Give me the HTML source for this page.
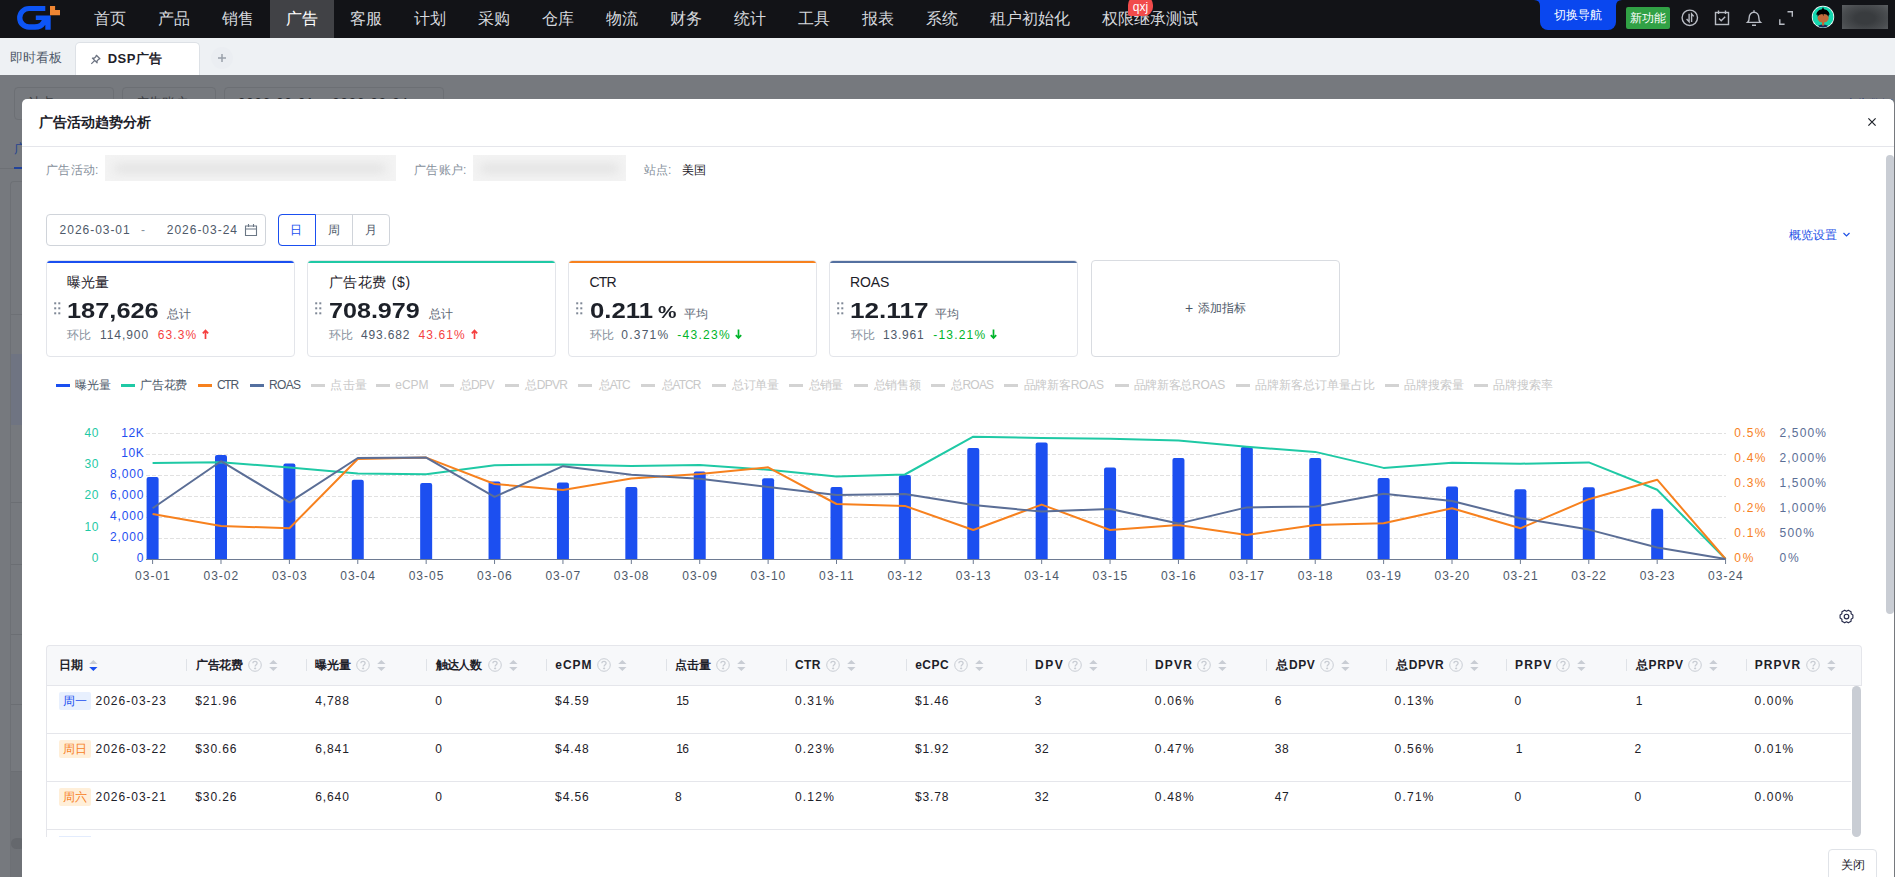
<!DOCTYPE html><html><head><meta charset="utf-8"><style>
*{box-sizing:border-box;margin:0;padding:0}
html,body{width:1895px;height:877px;overflow:hidden;background:#fff;font-family:"Liberation Sans",sans-serif;color:#1d2129}
.a{position:absolute;white-space:nowrap}
.bm{display:inline-block;width:0;height:0}
</style></head><body>
<div class="a" style="left:0;top:0;width:1895px;height:38px;background:#121317"></div>
<svg class="a" style="left:0;top:0" width="70" height="37" viewBox="0 0 70 37">
<path d="M29 6 H45.3 V11.1 H29 A6.6 6.6 0 0 0 29 24.3 H34.5 C38.5 24.3 40.8 22.6 41.8 19.9 H35.8 V15.5 H50.7 V29.8 H45.3 V24.8 C43.2 28.2 40 29.8 35 29.8 H29 A11.9 11.9 0 0 1 29 6 Z" fill="#0d55f5"/>
<path d="M50 6 H55.1 V10.1 H60 V15.2 H50 Z" fill="#ef8633"/>
</svg>
<div class="a" style="left:270px;top:0;width:64px;height:38px;background:#414246"></div>
<div class="a" style="left:94px;top:0;height:37px;line-height:37px;font-size:16px;color:#d6d9de">首页</div>
<div class="a" style="left:158px;top:0;height:37px;line-height:37px;font-size:16px;color:#d6d9de">产品</div>
<div class="a" style="left:222px;top:0;height:37px;line-height:37px;font-size:16px;color:#d6d9de">销售</div>
<div class="a" style="left:286px;top:0;height:37px;line-height:37px;font-size:16px;color:#ffffff">广告</div>
<div class="a" style="left:350px;top:0;height:37px;line-height:37px;font-size:16px;color:#d6d9de">客服</div>
<div class="a" style="left:414px;top:0;height:37px;line-height:37px;font-size:16px;color:#d6d9de">计划</div>
<div class="a" style="left:478px;top:0;height:37px;line-height:37px;font-size:16px;color:#d6d9de">采购</div>
<div class="a" style="left:542px;top:0;height:37px;line-height:37px;font-size:16px;color:#d6d9de">仓库</div>
<div class="a" style="left:606px;top:0;height:37px;line-height:37px;font-size:16px;color:#d6d9de">物流</div>
<div class="a" style="left:670px;top:0;height:37px;line-height:37px;font-size:16px;color:#d6d9de">财务</div>
<div class="a" style="left:734px;top:0;height:37px;line-height:37px;font-size:16px;color:#d6d9de">统计</div>
<div class="a" style="left:798px;top:0;height:37px;line-height:37px;font-size:16px;color:#d6d9de">工具</div>
<div class="a" style="left:862px;top:0;height:37px;line-height:37px;font-size:16px;color:#d6d9de">报表</div>
<div class="a" style="left:926px;top:0;height:37px;line-height:37px;font-size:16px;color:#d6d9de">系统</div>
<div class="a" style="left:990px;top:0;height:37px;line-height:37px;font-size:16px;color:#d6d9de">租户初始化</div>
<div class="a" style="left:1102px;top:0;height:37px;line-height:37px;font-size:16px;color:#d6d9de">权限继承测试</div>
<div class="a" style="left:1128px;top:-4px;width:25px;height:20px;border-radius:9px 9px 9px 2px;background:#f14b4b;color:#fff;font-size:12px;line-height:22px;text-align:center">qxj</div>
<svg class="a" style="left:1534px;top:0" width="88" height="8" viewBox="0 0 88 8"><path d="M0 0 Q6 0 6 6 V8 H82 V6 Q82 0 88 0 Z" fill="#0a47ef"/></svg>
<div class="a" style="left:1540px;top:0;width:76px;height:30px;background:#0a47ef;border-radius:0 0 8px 8px;color:#fff;font-size:12px;line-height:30px;text-align:center">切换导航</div>
<div class="a" style="left:1626px;top:7px;width:44px;height:22px;background:#31a145;border-radius:2px;color:#fff;font-size:12px;line-height:22px;text-align:center">新功能</div>
<svg class="a" style="left:1680px;top:8px" width="20" height="20" viewBox="0 0 20 20" fill="none" stroke="#b8bcc4" stroke-width="1.4">
<circle cx="9.8" cy="9.8" r="7.7"/><path d="M9.1 5.8 V13.7 L6.6 11.1 M11.6 13.9 V5.9 L13.7 8.4"/></svg>
<svg class="a" style="left:1712px;top:8px" width="20" height="20" viewBox="0 0 20 20" fill="none" stroke="#b8bcc4" stroke-width="1.4">
<rect x="3.5" y="4.5" width="13" height="12"/><path d="M6.5 2.5 V6 M13.5 2.5 V6 M7 10.5 L9.2 12.7 L13.2 8.7"/></svg>
<svg class="a" style="left:1744px;top:8px" width="20" height="20" viewBox="0 0 20 20" fill="none" stroke="#b8bcc4" stroke-width="1.4">
<path d="M10 2.3 V4 M3.6 14.4 C4.8 13.4 5.2 12.3 5.2 9.6 C5.2 6.4 7.3 4.2 10 4.2 C12.7 4.2 14.8 6.4 14.8 9.6 C14.8 12.3 15.2 13.4 16.4 14.4 Z M8 17.2 H12"/></svg>
<svg class="a" style="left:1776px;top:8px" width="20" height="20" viewBox="0 0 20 20" fill="none" stroke="#b8bcc4" stroke-width="1.4">
<path d="M11.5 3.8 H16.3 V8.8 M8.6 16.2 H3.8 V11.2"/></svg>
<svg class="a" style="left:1811px;top:5px" width="24" height="24" viewBox="0 0 24 24">
<defs><clipPath id="avc"><circle cx="12" cy="11.9" r="10.5"/></clipPath></defs>
<circle cx="12" cy="11.9" r="11.2" fill="#fff"/><circle cx="12" cy="11.9" r="10.5" fill="#14d6ae"/>
<g clip-path="url(#avc)">
<ellipse cx="12" cy="22.6" rx="6.2" ry="3" fill="#142a5c"/>
<rect x="11" y="15.5" width="2.2" height="5" fill="#c0693a"/>
<ellipse cx="12.1" cy="12.9" rx="5.6" ry="4.6" fill="#c0693a"/>
<path d="M5.2 9.8 C6 6 8.5 4.6 11 4.3 L12 2.1 L13 4.3 C15.5 4.6 18 6 18.7 9.8 L17.9 9.5 L17.5 11.8 C16.5 9.3 14 8.8 12.7 8.9 L12.3 11.2 L11.5 9 C9.5 9.2 7.5 9.6 6.7 11.8 L6.3 9.5 Z" fill="#000"/>
</g></svg>
<div class="a" style="left:1842px;top:5px;width:46px;height:24px;background:radial-gradient(ellipse at 50% 55%,#393c3f 30%,#4a4d50 70%,#5c5f62 100%)"></div>
<div class="a" style="left:0;top:38px;width:1895px;height:37px;background:#eef1f4"></div>
<div class="a" style="left:10px;top:37px;height:38px;line-height:42px;font-size:13px;color:#4e5969">即时看板</div>
<div class="a" style="left:74.5px;top:42px;width:125px;height:34px;background:#fff;border:1px solid #dde1e6;border-bottom:none;border-radius:5px 5px 0 0"></div>
<svg class="a" style="left:89.5px;top:53.5px" width="11" height="11" viewBox="0 0 11 11" fill="none" stroke="#6b7280" stroke-width="1.25">
<path d="M6.4 1.3 L9.9 4.8 L8.5 5.4 L7 7 L7.1 8.8 L2.4 4.1 L4.2 4.2 L5.8 2.7 Z M4.6 6.6 L1.3 9.9" stroke-linejoin="round"/></svg>
<div id="t1" class="a" style="left:107.71px;top:50.11px;font-size:13px;line-height:18px;color:#1d2129;font-weight:bold;letter-spacing:0.493px;"><i class="bm"></i>DSP广告</div>
<div class="a" style="left:211px;top:47px;width:22px;height:22px;border-radius:11px;background:#ebeef2"></div>
<svg class="a" style="left:217px;top:53px" width="10" height="10" viewBox="0 0 10 10" stroke="#9aa1ab" stroke-width="1.5"><path d="M5 1 V9 M1 5 H9"/></svg>
<div class="a" style="left:0;top:75px;width:1895px;height:802px;background:#76797e"></div>
<div class="a" style="left:14px;top:87px;width:100px;height:33px;border:1px solid #6c6f74;border-radius:4px"></div>
<div class="a" style="left:122px;top:87px;width:94px;height:33px;border:1px solid #6c6f74;border-radius:4px"></div>
<div class="a" style="left:224px;top:87px;width:220px;height:33px;border:1px solid #6c6f74;border-radius:4px"></div>
<div class="a" style="left:28px;top:94px;font-size:13px;line-height:18px;color:#3c3e42">站点</div>
<div class="a" style="left:136px;top:94px;font-size:13px;line-height:18px;color:#3c3e42">广告账户</div>
<div class="a" style="left:238px;top:94px;font-size:13px;line-height:18px;color:#2a2c30;letter-spacing:1px">2026-03-01 ~ 2026-03-24 ⌗</div>
<div class="a" style="left:1817px;top:95px;font-size:12px;line-height:18px;color:#1b3478">DSP 广告数据</div>
<div class="a" style="left:0;top:168px;width:22px;height:1px;background:#6d7075"></div>
<div class="a" style="left:14px;top:141px;font-size:13px;line-height:16px;color:#26448f">广</div>
<div class="a" style="left:14px;top:166.5px;width:8px;height:2.5px;background:#22439a"></div>
<div class="a" style="left:10px;top:181px;width:14px;height:700px;border:1px solid #6d7075;border-right:none;border-radius:4px 0 0 0"></div>
<div class="a" style="left:11px;top:314px;width:11px;height:1px;background:#6d7075"></div>
<div class="a" style="left:11px;top:354px;width:11px;height:71px;background:#6f7482"></div>
<div class="a" style="left:11px;top:502px;width:11px;height:1px;background:#6b6e73"></div>
<div class="a" style="left:11px;top:564px;width:11px;height:1px;background:#6b6e73"></div>
<div class="a" style="left:11px;top:634px;width:11px;height:1px;background:#6b6e73"></div>
<div class="a" style="left:11px;top:704px;width:11px;height:1px;background:#6b6e73"></div>
<div class="a" style="left:11px;top:771px;width:11px;height:1px;background:#6b6e73"></div>
<div class="a" style="left:11px;top:772px;width:11px;height:105px;background:#6f7277"></div>
<div class="a" style="left:11px;top:838px;width:14px;height:11px;border-radius:5.5px;background:#65686d"></div>
<div class="a" style="left:22px;top:99px;width:1872px;height:800px;background:#fff;border-radius:5px 5px 0 0"></div>
<div id="t2" class="a" style="left:38.61px;top:112.41px;font-size:14px;line-height:20px;color:#1d2129;font-weight:bold;"><i class="bm"></i>广告活动趋势分析</div>
<svg class="a" style="left:1866px;top:116px" width="12" height="12" viewBox="0 0 12 12" stroke="#1d2129" stroke-width="1.2"><path d="M2.4 2.4 L9.6 9.6 M9.6 2.4 L2.4 9.6"/></svg>
<div class="a" style="left:22px;top:146px;width:1872px;height:1px;background:#e5e6eb"></div>
<div class="a" style="left:1885.5px;top:155px;width:8px;height:459px;border-radius:4px;background:#c9cdd4"></div>
<div id="t3" class="a" style="left:46.00px;top:161.50px;font-size:12px;line-height:17px;color:#86909c;letter-spacing:0.250px;"><i class="bm"></i>广告活动:</div>
<div class="a" style="left:105px;top:155px;width:291px;height:26px;background:#f3f3f3;overflow:hidden"><div style="position:absolute;left:10px;top:9px;width:270px;height:9px;background:#e2e2e2;filter:blur(5px)"></div></div>
<div id="t4" class="a" style="left:414.00px;top:161.50px;font-size:12px;line-height:17px;color:#86909c;letter-spacing:0.250px;"><i class="bm"></i>广告账户:</div>
<div class="a" style="left:473px;top:155px;width:153px;height:26px;background:#f3f3f3;overflow:hidden"><div style="position:absolute;left:8px;top:9px;width:137px;height:9px;background:#e2e2e2;filter:blur(5px)"></div></div>
<div id="t5" class="a" style="left:644.00px;top:161.50px;font-size:12px;line-height:17px;color:#86909c;"><i class="bm"></i>站点:</div>
<div id="t6" class="a" style="left:682.00px;top:161.50px;font-size:12px;line-height:17px;color:#1d2129;"><i class="bm"></i>美国</div>
<div class="a" style="left:46px;top:214px;width:220px;height:32px;border:1px solid #d0d4da;border-radius:4px"></div>
<div id="t7" class="a" style="left:59.61px;top:222.11px;font-size:12px;line-height:17px;color:#4e5969;letter-spacing:0.966px;"><i class="bm"></i>2026-03-01</div>
<div id="t8" class="a" style="left:141.00px;top:222.11px;font-size:12px;line-height:17px;color:#86909c;"><i class="bm"></i>-</div>
<div id="t9" class="a" style="left:166.80px;top:222.11px;font-size:12px;line-height:17px;color:#4e5969;letter-spacing:0.977px;"><i class="bm"></i>2026-03-24</div>
<svg class="a" style="left:244px;top:223px" width="14" height="14" viewBox="0 0 14 14" fill="none" stroke="#6b7785" stroke-width="1.1"><path d="M1.5 3 H12.5 V12.5 H1.5 Z M1.5 6 H12.5 M4.5 1 V4 M9.5 1 V4"/></svg>
<div class="a" style="left:278px;top:214px;width:112px;height:32px;border:1px solid #d0d4da;border-radius:4px"></div>
<div class="a" style="left:352px;top:214px;width:1px;height:32px;background:#d0d4da"></div>
<div class="a" style="left:278px;top:214px;width:38px;height:32px;border:1.5px solid #1a4ff0;border-radius:4px 0 0 4px"></div>
<div id="t10" class="a" style="left:290.00px;top:221.71px;font-size:12px;line-height:17px;color:#1a4ff0;"><i class="bm"></i>日</div>
<div id="t11" class="a" style="left:328.00px;top:221.71px;font-size:12px;line-height:17px;color:#4e5969;"><i class="bm"></i>周</div>
<div id="t12" class="a" style="left:365.00px;top:221.71px;font-size:12px;line-height:17px;color:#4e5969;"><i class="bm"></i>月</div>
<div id="t13" class="a" style="left:1789.30px;top:226.71px;font-size:12px;line-height:17px;color:#1f52e6;"><i class="bm"></i>概览设置</div>
<svg class="a" style="left:1842px;top:231px" width="9" height="7" viewBox="0 0 9 7" fill="none" stroke="#1f52e6" stroke-width="1.2"><path d="M1.5 2 L4.5 5 L7.5 2"/></svg>
<div class="a" style="left:46px;top:260px;width:249px;height:97px;border:1px solid #e3e5ea;border-radius:4px;overflow:hidden"><div style="position:absolute;left:-1px;top:-1px;right:-1px;height:2.5px;background:#1a4ff0"></div></div>
<svg class="a" style="left:54px;top:302px" width="7" height="13" viewBox="0 0 7 13" fill="#7f8896"><rect x="0.2" y="0.3" width="2" height="2"/><rect x="4.3" y="0.3" width="2" height="2"/><rect x="0.2" y="5.3" width="2" height="2"/><rect x="4.3" y="5.3" width="2" height="2"/><rect x="0.2" y="10.3" width="2" height="2"/><rect x="4.3" y="10.3" width="2" height="2"/></svg>
<div class="a" style="left:307px;top:260px;width:249px;height:97px;border:1px solid #e3e5ea;border-radius:4px;overflow:hidden"><div style="position:absolute;left:-1px;top:-1px;right:-1px;height:2.5px;background:#1fc9a5"></div></div>
<svg class="a" style="left:315px;top:302px" width="7" height="13" viewBox="0 0 7 13" fill="#7f8896"><rect x="0.2" y="0.3" width="2" height="2"/><rect x="4.3" y="0.3" width="2" height="2"/><rect x="0.2" y="5.3" width="2" height="2"/><rect x="4.3" y="5.3" width="2" height="2"/><rect x="0.2" y="10.3" width="2" height="2"/><rect x="4.3" y="10.3" width="2" height="2"/></svg>
<div class="a" style="left:568px;top:260px;width:249px;height:97px;border:1px solid #e3e5ea;border-radius:4px;overflow:hidden"><div style="position:absolute;left:-1px;top:-1px;right:-1px;height:2.5px;background:#f7811e"></div></div>
<svg class="a" style="left:576px;top:302px" width="7" height="13" viewBox="0 0 7 13" fill="#7f8896"><rect x="0.2" y="0.3" width="2" height="2"/><rect x="4.3" y="0.3" width="2" height="2"/><rect x="0.2" y="5.3" width="2" height="2"/><rect x="4.3" y="5.3" width="2" height="2"/><rect x="0.2" y="10.3" width="2" height="2"/><rect x="4.3" y="10.3" width="2" height="2"/></svg>
<div class="a" style="left:829px;top:260px;width:249px;height:97px;border:1px solid #e3e5ea;border-radius:4px;overflow:hidden"><div style="position:absolute;left:-1px;top:-1px;right:-1px;height:2.5px;background:#5470a0"></div></div>
<svg class="a" style="left:837px;top:302px" width="7" height="13" viewBox="0 0 7 13" fill="#7f8896"><rect x="0.2" y="0.3" width="2" height="2"/><rect x="4.3" y="0.3" width="2" height="2"/><rect x="0.2" y="5.3" width="2" height="2"/><rect x="4.3" y="5.3" width="2" height="2"/><rect x="0.2" y="10.3" width="2" height="2"/><rect x="4.3" y="10.3" width="2" height="2"/></svg>
<div class="a" style="left:1091px;top:260px;width:249px;height:97px;border:1px solid #d9dce1;border-radius:4px"></div>
<div id="t14" class="a" style="left:67.41px;top:271.50px;font-size:14px;line-height:20px;color:#1d2129;"><i class="bm"></i>曝光量</div>
<div id="t15" class="a" style="left:67.26px;top:295.00px;font-size:22px;line-height:31px;color:#1d2129;font-weight:bold;transform:scaleX(1.1534);transform-origin:0 0;"><i class="bm"></i>187,626</div>
<div id="t16" class="a" style="left:166.80px;top:305.50px;font-size:12px;line-height:17px;color:#5c6673;"><i class="bm"></i>总计</div>
<div id="t17" class="a" style="left:67.00px;top:326.71px;font-size:12px;line-height:17px;color:#86909c;"><i class="bm"></i>环比</div>
<div id="t18" class="a" style="left:100.00px;top:327.21px;font-size:12px;line-height:17px;color:#4e5969;letter-spacing:0.931px;"><i class="bm"></i>114,900</div>
<div id="t19" class="a" style="left:157.71px;top:327.21px;font-size:12px;line-height:17px;color:#f53f3f;letter-spacing:1.086px;"><i class="bm"></i>63.3%</div>
<svg class="a" style="left:201.5px;top:329px" width="7" height="11" viewBox="0 0 7 11" fill="none" stroke="#f53f3f" stroke-width="1.7"><path d="M3.5 10 V1.5 M0.8 4.3 L3.5 1.5 L6.2 4.3"/></svg>
<div id="t20" class="a" style="left:328.50px;top:271.50px;font-size:14px;line-height:20px;color:#1d2129;letter-spacing:0.666px;"><i class="bm"></i>广告花费 ($)</div>
<div id="t21" class="a" style="left:329.00px;top:295.00px;font-size:22px;line-height:31px;color:#1d2129;font-weight:bold;transform:scaleX(1.1414);transform-origin:0 0;"><i class="bm"></i>708.979</div>
<div id="t22" class="a" style="left:428.50px;top:305.50px;font-size:12px;line-height:17px;color:#5c6673;"><i class="bm"></i>总计</div>
<div id="t23" class="a" style="left:328.50px;top:326.71px;font-size:12px;line-height:17px;color:#86909c;"><i class="bm"></i>环比</div>
<div id="t24" class="a" style="left:361.00px;top:327.21px;font-size:12px;line-height:17px;color:#4e5969;letter-spacing:0.833px;"><i class="bm"></i>493.682</div>
<div id="t25" class="a" style="left:418.61px;top:327.21px;font-size:12px;line-height:17px;color:#f53f3f;letter-spacing:1.074px;"><i class="bm"></i>43.61%</div>
<svg class="a" style="left:470.5px;top:329px" width="7" height="11" viewBox="0 0 7 11" fill="none" stroke="#f53f3f" stroke-width="1.7"><path d="M3.5 10 V1.5 M0.8 4.3 L3.5 1.5 L6.2 4.3"/></svg>
<div id="t26" class="a" style="left:589.50px;top:272.00px;font-size:14px;line-height:20px;color:#1d2129;letter-spacing:-0.831px;"><i class="bm"></i>CTR</div>
<div id="t27" class="a" style="left:589.50px;top:295.00px;font-size:22px;line-height:31px;color:#1d2129;font-weight:bold;transform:scaleX(1.1697);transform-origin:0 0;"><i class="bm"></i>0.211</div>
<div id="t28" class="a" style="left:658.41px;top:301.00px;font-size:17px;line-height:24px;color:#1d2129;font-weight:bold;transform:scaleX(1.2200);transform-origin:0 0;"><i class="bm"></i>%</div>
<div id="t29" class="a" style="left:684.00px;top:305.50px;font-size:12px;line-height:17px;color:#5c6673;"><i class="bm"></i>平均</div>
<div id="t30" class="a" style="left:589.50px;top:326.71px;font-size:12px;line-height:17px;color:#86909c;"><i class="bm"></i>环比</div>
<div id="t31" class="a" style="left:621.21px;top:327.21px;font-size:12px;line-height:17px;color:#4e5969;letter-spacing:1.254px;"><i class="bm"></i>0.371%</div>
<div id="t32" class="a" style="left:677.30px;top:327.21px;font-size:12px;line-height:17px;color:#00b42a;letter-spacing:1.279px;"><i class="bm"></i>-43.23%</div>
<svg class="a" style="left:734.5px;top:329px" width="7" height="11" viewBox="0 0 7 11" fill="none" stroke="#00b42a" stroke-width="1.7"><path d="M3.5 0.5 V9 M0.8 6.2 L3.5 9 L6.2 6.2"/></svg>
<div id="t33" class="a" style="left:850.00px;top:272.00px;font-size:14px;line-height:20px;color:#1d2129;letter-spacing:-0.113px;"><i class="bm"></i>ROAS</div>
<div id="t34" class="a" style="left:849.81px;top:295.00px;font-size:22px;line-height:31px;color:#1d2129;font-weight:bold;transform:scaleX(1.1875);transform-origin:0 0;"><i class="bm"></i>12.117</div>
<div id="t35" class="a" style="left:934.71px;top:305.50px;font-size:12px;line-height:17px;color:#5c6673;"><i class="bm"></i>平均</div>
<div id="t36" class="a" style="left:851.00px;top:326.71px;font-size:12px;line-height:17px;color:#86909c;"><i class="bm"></i>环比</div>
<div id="t37" class="a" style="left:883.00px;top:327.21px;font-size:12px;line-height:17px;color:#4e5969;letter-spacing:0.794px;"><i class="bm"></i>13.961</div>
<div id="t38" class="a" style="left:933.21px;top:327.21px;font-size:12px;line-height:17px;color:#00b42a;letter-spacing:1.212px;"><i class="bm"></i>-13.21%</div>
<svg class="a" style="left:990.2px;top:329px" width="7" height="11" viewBox="0 0 7 11" fill="none" stroke="#00b42a" stroke-width="1.7"><path d="M3.5 0.5 V9 M0.8 6.2 L3.5 9 L6.2 6.2"/></svg>
<div id="t39" class="a" style="left:1185.00px;top:297.61px;font-size:14px;line-height:20px;color:#4e5969;"><i class="bm"></i>+</div>
<div id="t40" class="a" style="left:1198.21px;top:299.61px;font-size:12px;line-height:17px;color:#4e5969;letter-spacing:0.067px;"><i class="bm"></i>添加指标</div>
<div class="a" style="left:55.8px;top:384px;width:14px;height:3px;background:#1a4ff0"></div>
<div id="t41" class="a" style="left:74.80px;top:376.71px;font-size:12px;line-height:17px;color:#4e5969;letter-spacing:-0.050px;"><i class="bm"></i>曝光量</div>
<div class="a" style="left:120.8px;top:384px;width:14px;height:3px;background:#1fc9a5"></div>
<div id="t42" class="a" style="left:140.30px;top:376.71px;font-size:12px;line-height:17px;color:#4e5969;letter-spacing:-0.333px;"><i class="bm"></i>广告花费</div>
<div class="a" style="left:197.9px;top:384px;width:14px;height:3px;background:#f7811e"></div>
<div id="t43" class="a" style="left:216.91px;top:377.21px;font-size:12px;line-height:17px;color:#4e5969;letter-spacing:-1.198px;"><i class="bm"></i>CTR</div>
<div class="a" style="left:249.6px;top:384px;width:14px;height:3px;background:#5470a0"></div>
<div id="t44" class="a" style="left:269.00px;top:377.21px;font-size:12px;line-height:17px;color:#4e5969;letter-spacing:-0.668px;"><i class="bm"></i>ROAS</div>
<div class="a" style="left:311.2px;top:384px;width:14px;height:3px;background:#d3d3d3"></div>
<div id="t45" class="a" style="left:330.21px;top:376.71px;font-size:12px;line-height:17px;color:#c8c8c8;letter-spacing:0.300px;"><i class="bm"></i>点击量</div>
<div class="a" style="left:376.0px;top:384px;width:14px;height:3px;background:#d3d3d3"></div>
<div id="t46" class="a" style="left:395.30px;top:377.21px;font-size:12px;line-height:17px;color:#c8c8c8;letter-spacing:-0.081px;"><i class="bm"></i>eCPM</div>
<div class="a" style="left:439.5px;top:384px;width:14px;height:3px;background:#d3d3d3"></div>
<div id="t47" class="a" style="left:459.50px;top:376.71px;font-size:12px;line-height:17px;color:#c8c8c8;letter-spacing:-0.590px;"><i class="bm"></i>总DPV</div>
<div class="a" style="left:504.9px;top:384px;width:14px;height:3px;background:#d3d3d3"></div>
<div id="t48" class="a" style="left:525.41px;top:376.71px;font-size:12px;line-height:17px;color:#c8c8c8;letter-spacing:-0.693px;"><i class="bm"></i>总DPVR</div>
<div class="a" style="left:578.4px;top:384px;width:14px;height:3px;background:#d3d3d3"></div>
<div id="t49" class="a" style="left:598.80px;top:376.71px;font-size:12px;line-height:17px;color:#c8c8c8;letter-spacing:-1.081px;"><i class="bm"></i>总ATC</div>
<div class="a" style="left:641.0px;top:384px;width:14px;height:3px;background:#d3d3d3"></div>
<div id="t50" class="a" style="left:661.50px;top:376.71px;font-size:12px;line-height:17px;color:#c8c8c8;letter-spacing:-0.977px;"><i class="bm"></i>总ATCR</div>
<div class="a" style="left:712.2px;top:384px;width:14px;height:3px;background:#d3d3d3"></div>
<div id="t51" class="a" style="left:732.21px;top:376.71px;font-size:12px;line-height:17px;color:#c8c8c8;letter-spacing:-0.500px;"><i class="bm"></i>总订单量</div>
<div class="a" style="left:788.8px;top:384px;width:14px;height:3px;background:#d3d3d3"></div>
<div id="t52" class="a" style="left:808.80px;top:376.71px;font-size:12px;line-height:17px;color:#c8c8c8;letter-spacing:-0.800px;"><i class="bm"></i>总销量</div>
<div class="a" style="left:853.8px;top:384px;width:14px;height:3px;background:#d3d3d3"></div>
<div id="t53" class="a" style="left:873.80px;top:376.71px;font-size:12px;line-height:17px;color:#c8c8c8;letter-spacing:-0.300px;"><i class="bm"></i>总销售额</div>
<div class="a" style="left:931.2px;top:384px;width:14px;height:3px;background:#d3d3d3"></div>
<div id="t54" class="a" style="left:951.21px;top:376.71px;font-size:12px;line-height:17px;color:#c8c8c8;letter-spacing:-0.776px;"><i class="bm"></i>总ROAS</div>
<div class="a" style="left:1004.3px;top:384px;width:14px;height:3px;background:#d3d3d3"></div>
<div id="t55" class="a" style="left:1023.71px;top:376.71px;font-size:12px;line-height:17px;color:#c8c8c8;letter-spacing:-0.258px;"><i class="bm"></i>品牌新客ROAS</div>
<div class="a" style="left:1114.5px;top:384px;width:14px;height:3px;background:#d3d3d3"></div>
<div id="t56" class="a" style="left:1133.50px;top:376.71px;font-size:12px;line-height:17px;color:#c8c8c8;letter-spacing:-0.288px;"><i class="bm"></i>品牌新客总ROAS</div>
<div class="a" style="left:1236.0px;top:384px;width:14px;height:3px;background:#d3d3d3"></div>
<div id="t57" class="a" style="left:1255.00px;top:376.71px;font-size:12px;line-height:17px;color:#c8c8c8;letter-spacing:-0.044px;"><i class="bm"></i>品牌新客总订单量占比</div>
<div class="a" style="left:1385.2px;top:384px;width:14px;height:3px;background:#d3d3d3"></div>
<div id="t58" class="a" style="left:1404.21px;top:376.71px;font-size:12px;line-height:17px;color:#c8c8c8;letter-spacing:-0.125px;"><i class="bm"></i>品牌搜索量</div>
<div class="a" style="left:1473.9px;top:384px;width:14px;height:3px;background:#d3d3d3"></div>
<div id="t59" class="a" style="left:1493.30px;top:376.71px;font-size:12px;line-height:17px;color:#c8c8c8;letter-spacing:-0.075px;"><i class="bm"></i>品牌搜索率</div>
<svg class="a" style="left:0;top:400px" width="1895" height="200" viewBox="0 400 1895 200">
<line x1="146" y1="433.5" x2="1726" y2="433.5" stroke="#e1e1e1" stroke-width="1" stroke-dasharray="4 2"/>
<line x1="146" y1="454.5" x2="1726" y2="454.5" stroke="#e1e1e1" stroke-width="1" stroke-dasharray="4 2"/>
<line x1="146" y1="475.5" x2="1726" y2="475.5" stroke="#e1e1e1" stroke-width="1" stroke-dasharray="4 2"/>
<line x1="146" y1="496.5" x2="1726" y2="496.5" stroke="#e1e1e1" stroke-width="1" stroke-dasharray="4 2"/>
<line x1="146" y1="517.5" x2="1726" y2="517.5" stroke="#e1e1e1" stroke-width="1" stroke-dasharray="4 2"/>
<line x1="146" y1="538.5" x2="1726" y2="538.5" stroke="#e1e1e1" stroke-width="1" stroke-dasharray="4 2"/>
<path d="M146.60 559 V479.00 Q146.60 477.00 148.60 477.00 H156.60 Q158.60 477.00 158.60 479.00 V559 Z" fill="#1c4ff0"/>
<path d="M214.99 559 V457.00 Q214.99 455.00 216.99 455.00 H224.99 Q226.99 455.00 226.99 457.00 V559 Z" fill="#1c4ff0"/>
<path d="M283.38 559 V465.50 Q283.38 463.50 285.38 463.50 H293.38 Q295.38 463.50 295.38 465.50 V559 Z" fill="#1c4ff0"/>
<path d="M351.77 559 V481.70 Q351.77 479.70 353.77 479.70 H361.77 Q363.77 479.70 363.77 481.70 V559 Z" fill="#1c4ff0"/>
<path d="M420.16 559 V485.00 Q420.16 483.00 422.16 483.00 H430.16 Q432.16 483.00 432.16 485.00 V559 Z" fill="#1c4ff0"/>
<path d="M488.55 559 V483.40 Q488.55 481.40 490.55 481.40 H498.55 Q500.55 481.40 500.55 483.40 V559 Z" fill="#1c4ff0"/>
<path d="M556.94 559 V484.50 Q556.94 482.50 558.94 482.50 H566.94 Q568.94 482.50 568.94 484.50 V559 Z" fill="#1c4ff0"/>
<path d="M625.33 559 V489.00 Q625.33 487.00 627.33 487.00 H635.33 Q637.33 487.00 637.33 489.00 V559 Z" fill="#1c4ff0"/>
<path d="M693.72 559 V473.50 Q693.72 471.50 695.72 471.50 H703.72 Q705.72 471.50 705.72 473.50 V559 Z" fill="#1c4ff0"/>
<path d="M762.11 559 V480.30 Q762.11 478.30 764.11 478.30 H772.11 Q774.11 478.30 774.11 480.30 V559 Z" fill="#1c4ff0"/>
<path d="M830.50 559 V489.00 Q830.50 487.00 832.50 487.00 H840.50 Q842.50 487.00 842.50 489.00 V559 Z" fill="#1c4ff0"/>
<path d="M898.89 559 V476.90 Q898.89 474.90 900.89 474.90 H908.89 Q910.89 474.90 910.89 476.90 V559 Z" fill="#1c4ff0"/>
<path d="M967.28 559 V449.90 Q967.28 447.90 969.28 447.90 H977.28 Q979.28 447.90 979.28 449.90 V559 Z" fill="#1c4ff0"/>
<path d="M1035.67 559 V444.40 Q1035.67 442.40 1037.67 442.40 H1045.67 Q1047.67 442.40 1047.67 444.40 V559 Z" fill="#1c4ff0"/>
<path d="M1104.06 559 V469.50 Q1104.06 467.50 1106.06 467.50 H1114.06 Q1116.06 467.50 1116.06 469.50 V559 Z" fill="#1c4ff0"/>
<path d="M1172.45 559 V460.00 Q1172.45 458.00 1174.45 458.00 H1182.45 Q1184.45 458.00 1184.45 460.00 V559 Z" fill="#1c4ff0"/>
<path d="M1240.84 559 V449.00 Q1240.84 447.00 1242.84 447.00 H1250.84 Q1252.84 447.00 1252.84 449.00 V559 Z" fill="#1c4ff0"/>
<path d="M1309.23 559 V460.00 Q1309.23 458.00 1311.23 458.00 H1319.23 Q1321.23 458.00 1321.23 460.00 V559 Z" fill="#1c4ff0"/>
<path d="M1377.62 559 V480.00 Q1377.62 478.00 1379.62 478.00 H1387.62 Q1389.62 478.00 1389.62 480.00 V559 Z" fill="#1c4ff0"/>
<path d="M1446.01 559 V488.50 Q1446.01 486.50 1448.01 486.50 H1456.01 Q1458.01 486.50 1458.01 488.50 V559 Z" fill="#1c4ff0"/>
<path d="M1514.40 559 V491.20 Q1514.40 489.20 1516.40 489.20 H1524.40 Q1526.40 489.20 1526.40 491.20 V559 Z" fill="#1c4ff0"/>
<path d="M1582.79 559 V489.30 Q1582.79 487.30 1584.79 487.30 H1592.79 Q1594.79 487.30 1594.79 489.30 V559 Z" fill="#1c4ff0"/>
<path d="M1651.18 559 V510.80 Q1651.18 508.80 1653.18 508.80 H1661.18 Q1663.18 508.80 1663.18 510.80 V559 Z" fill="#1c4ff0"/>
<line x1="146" y1="559.5" x2="1726" y2="559.5" stroke="#6e7b92" stroke-width="1"/>
<line x1="152.60" y1="559" x2="152.60" y2="564" stroke="#6e7b92" stroke-width="1"/>
<line x1="220.99" y1="559" x2="220.99" y2="564" stroke="#6e7b92" stroke-width="1"/>
<line x1="289.38" y1="559" x2="289.38" y2="564" stroke="#6e7b92" stroke-width="1"/>
<line x1="357.77" y1="559" x2="357.77" y2="564" stroke="#6e7b92" stroke-width="1"/>
<line x1="426.16" y1="559" x2="426.16" y2="564" stroke="#6e7b92" stroke-width="1"/>
<line x1="494.55" y1="559" x2="494.55" y2="564" stroke="#6e7b92" stroke-width="1"/>
<line x1="562.94" y1="559" x2="562.94" y2="564" stroke="#6e7b92" stroke-width="1"/>
<line x1="631.33" y1="559" x2="631.33" y2="564" stroke="#6e7b92" stroke-width="1"/>
<line x1="699.72" y1="559" x2="699.72" y2="564" stroke="#6e7b92" stroke-width="1"/>
<line x1="768.11" y1="559" x2="768.11" y2="564" stroke="#6e7b92" stroke-width="1"/>
<line x1="836.50" y1="559" x2="836.50" y2="564" stroke="#6e7b92" stroke-width="1"/>
<line x1="904.89" y1="559" x2="904.89" y2="564" stroke="#6e7b92" stroke-width="1"/>
<line x1="973.28" y1="559" x2="973.28" y2="564" stroke="#6e7b92" stroke-width="1"/>
<line x1="1041.67" y1="559" x2="1041.67" y2="564" stroke="#6e7b92" stroke-width="1"/>
<line x1="1110.06" y1="559" x2="1110.06" y2="564" stroke="#6e7b92" stroke-width="1"/>
<line x1="1178.45" y1="559" x2="1178.45" y2="564" stroke="#6e7b92" stroke-width="1"/>
<line x1="1246.84" y1="559" x2="1246.84" y2="564" stroke="#6e7b92" stroke-width="1"/>
<line x1="1315.23" y1="559" x2="1315.23" y2="564" stroke="#6e7b92" stroke-width="1"/>
<line x1="1383.62" y1="559" x2="1383.62" y2="564" stroke="#6e7b92" stroke-width="1"/>
<line x1="1452.01" y1="559" x2="1452.01" y2="564" stroke="#6e7b92" stroke-width="1"/>
<line x1="1520.40" y1="559" x2="1520.40" y2="564" stroke="#6e7b92" stroke-width="1"/>
<line x1="1588.79" y1="559" x2="1588.79" y2="564" stroke="#6e7b92" stroke-width="1"/>
<line x1="1657.18" y1="559" x2="1657.18" y2="564" stroke="#6e7b92" stroke-width="1"/>
<line x1="1725.57" y1="559" x2="1725.57" y2="564" stroke="#6e7b92" stroke-width="1"/>
<polyline points="152.60,463.00 220.99,462.20 289.38,467.50 357.77,473.40 426.16,474.20 494.55,465.20 562.94,464.50 631.33,466.00 699.72,465.00 768.11,469.80 836.50,476.60 904.89,474.50 973.28,436.70 1041.67,438.00 1110.06,438.80 1178.45,440.50 1246.84,446.80 1315.23,451.90 1383.62,467.90 1452.01,462.80 1520.40,463.70 1588.79,462.40 1657.18,489.80 1725.57,559.00" fill="none" stroke="#1fc9a5" stroke-width="2" stroke-linejoin="round"/>
<polyline points="152.60,514.00 220.99,526.00 289.38,528.30 357.77,459.00 426.16,457.60 494.55,484.00 562.94,489.90 631.33,478.50 699.72,474.00 768.11,467.30 836.50,504.00 904.89,505.90 973.28,530.00 1041.67,504.60 1110.06,530.00 1178.45,524.90 1246.84,535.00 1315.23,524.90 1383.62,523.20 1452.01,508.20 1520.40,528.30 1588.79,499.20 1657.18,479.70 1725.57,559.00" fill="none" stroke="#f7811e" stroke-width="2" stroke-linejoin="round"/>
<polyline points="152.60,508.20 220.99,461.20 289.38,502.30 357.77,458.00 426.16,457.60 494.55,496.80 562.94,466.20 631.33,474.70 699.72,478.70 768.11,487.10 836.50,495.10 904.89,493.90 973.28,505.10 1041.67,511.60 1110.06,508.90 1178.45,523.60 1246.84,507.40 1315.23,506.50 1383.62,493.70 1452.01,501.00 1520.40,518.20 1588.79,529.60 1657.18,547.50 1725.57,559.00" fill="none" stroke="#5b6e96" stroke-width="2" stroke-linejoin="round"/>
</svg>
<div id="t60" class="a" style="left:84.45px;top:424.50px;font-size:12px;line-height:17px;color:#1fc9a5;letter-spacing:0.590px;"><i class="bm"></i>40</div>
<div id="t61" class="a" style="left:84.45px;top:456.11px;font-size:12px;line-height:17px;color:#1fc9a5;letter-spacing:0.590px;"><i class="bm"></i>30</div>
<div id="t62" class="a" style="left:84.45px;top:487.21px;font-size:12px;line-height:17px;color:#1fc9a5;letter-spacing:0.590px;"><i class="bm"></i>20</div>
<div id="t63" class="a" style="left:84.45px;top:518.80px;font-size:12px;line-height:17px;color:#1fc9a5;letter-spacing:0.590px;"><i class="bm"></i>10</div>
<div id="t64" class="a" style="left:91.71px;top:549.80px;font-size:12px;line-height:17px;color:#1fc9a5;"><i class="bm"></i>0</div>
<div id="t65" class="a" style="left:121.22px;top:424.80px;font-size:12px;line-height:17px;color:#1f4ff0;letter-spacing:0.616px;"><i class="bm"></i>12K</div>
<div id="t66" class="a" style="left:121.22px;top:445.00px;font-size:12px;line-height:17px;color:#1f4ff0;letter-spacing:0.616px;"><i class="bm"></i>10K</div>
<div id="t67" class="a" style="left:109.91px;top:466.30px;font-size:12px;line-height:17px;color:#1f4ff0;letter-spacing:0.885px;"><i class="bm"></i>8,000</div>
<div id="t68" class="a" style="left:109.91px;top:487.21px;font-size:12px;line-height:17px;color:#1f4ff0;letter-spacing:0.885px;"><i class="bm"></i>6,000</div>
<div id="t69" class="a" style="left:109.91px;top:508.21px;font-size:12px;line-height:17px;color:#1f4ff0;letter-spacing:0.885px;"><i class="bm"></i>4,000</div>
<div id="t70" class="a" style="left:109.91px;top:529.30px;font-size:12px;line-height:17px;color:#1f4ff0;letter-spacing:0.885px;"><i class="bm"></i>2,000</div>
<div id="t71" class="a" style="left:136.80px;top:549.80px;font-size:12px;line-height:17px;color:#1f4ff0;"><i class="bm"></i>0</div>
<div id="t72" class="a" style="left:1734.21px;top:424.50px;font-size:12px;line-height:17px;color:#f7811e;letter-spacing:1.287px;"><i class="bm"></i>0.5%</div>
<div id="t73" class="a" style="left:1734.21px;top:449.80px;font-size:12px;line-height:17px;color:#f7811e;letter-spacing:1.287px;"><i class="bm"></i>0.4%</div>
<div id="t74" class="a" style="left:1734.21px;top:474.91px;font-size:12px;line-height:17px;color:#f7811e;letter-spacing:1.287px;"><i class="bm"></i>0.3%</div>
<div id="t75" class="a" style="left:1734.21px;top:500.00px;font-size:12px;line-height:17px;color:#f7811e;letter-spacing:1.287px;"><i class="bm"></i>0.2%</div>
<div id="t76" class="a" style="left:1734.21px;top:525.00px;font-size:12px;line-height:17px;color:#f7811e;letter-spacing:1.287px;"><i class="bm"></i>0.1%</div>
<div id="t77" class="a" style="left:1734.21px;top:549.80px;font-size:12px;line-height:17px;color:#f7811e;letter-spacing:1.870px;"><i class="bm"></i>0%</div>
<div id="t78" class="a" style="left:1779.50px;top:424.50px;font-size:12px;line-height:17px;color:#5b6e96;letter-spacing:1.156px;"><i class="bm"></i>2,500%</div>
<div id="t79" class="a" style="left:1779.50px;top:449.80px;font-size:12px;line-height:17px;color:#5b6e96;letter-spacing:1.156px;"><i class="bm"></i>2,000%</div>
<div id="t80" class="a" style="left:1779.50px;top:474.91px;font-size:12px;line-height:17px;color:#5b6e96;letter-spacing:1.156px;"><i class="bm"></i>1,500%</div>
<div id="t81" class="a" style="left:1779.50px;top:500.00px;font-size:12px;line-height:17px;color:#5b6e96;letter-spacing:1.156px;"><i class="bm"></i>1,000%</div>
<div id="t82" class="a" style="left:1779.50px;top:525.00px;font-size:12px;line-height:17px;color:#5b6e96;letter-spacing:1.262px;"><i class="bm"></i>500%</div>
<div id="t83" class="a" style="left:1779.50px;top:549.80px;font-size:12px;line-height:17px;color:#5b6e96;letter-spacing:1.870px;"><i class="bm"></i>0%</div>
<div id="t84" class="a" style="left:135.11px;top:567.91px;font-size:12px;line-height:17px;color:#4e5969;letter-spacing:0.996px;"><i class="bm"></i>03-01</div>
<div id="t85" class="a" style="left:203.50px;top:567.91px;font-size:12px;line-height:17px;color:#4e5969;letter-spacing:0.996px;"><i class="bm"></i>03-02</div>
<div id="t86" class="a" style="left:271.88px;top:567.91px;font-size:12px;line-height:17px;color:#4e5969;letter-spacing:0.996px;"><i class="bm"></i>03-03</div>
<div id="t87" class="a" style="left:340.27px;top:567.91px;font-size:12px;line-height:17px;color:#4e5969;letter-spacing:0.996px;"><i class="bm"></i>03-04</div>
<div id="t88" class="a" style="left:408.66px;top:567.91px;font-size:12px;line-height:17px;color:#4e5969;letter-spacing:0.996px;"><i class="bm"></i>03-05</div>
<div id="t89" class="a" style="left:477.05px;top:567.91px;font-size:12px;line-height:17px;color:#4e5969;letter-spacing:0.996px;"><i class="bm"></i>03-06</div>
<div id="t90" class="a" style="left:545.44px;top:567.91px;font-size:12px;line-height:17px;color:#4e5969;letter-spacing:0.996px;"><i class="bm"></i>03-07</div>
<div id="t91" class="a" style="left:613.83px;top:567.91px;font-size:12px;line-height:17px;color:#4e5969;letter-spacing:0.996px;"><i class="bm"></i>03-08</div>
<div id="t92" class="a" style="left:682.22px;top:567.91px;font-size:12px;line-height:17px;color:#4e5969;letter-spacing:0.996px;"><i class="bm"></i>03-09</div>
<div id="t93" class="a" style="left:750.61px;top:567.91px;font-size:12px;line-height:17px;color:#4e5969;letter-spacing:0.996px;"><i class="bm"></i>03-10</div>
<div id="t94" class="a" style="left:819.00px;top:567.91px;font-size:12px;line-height:17px;color:#4e5969;letter-spacing:1.218px;"><i class="bm"></i>03-11</div>
<div id="t95" class="a" style="left:887.40px;top:567.91px;font-size:12px;line-height:17px;color:#4e5969;letter-spacing:0.996px;"><i class="bm"></i>03-12</div>
<div id="t96" class="a" style="left:955.79px;top:567.91px;font-size:12px;line-height:17px;color:#4e5969;letter-spacing:0.996px;"><i class="bm"></i>03-13</div>
<div id="t97" class="a" style="left:1024.18px;top:567.91px;font-size:12px;line-height:17px;color:#4e5969;letter-spacing:0.996px;"><i class="bm"></i>03-14</div>
<div id="t98" class="a" style="left:1092.57px;top:567.91px;font-size:12px;line-height:17px;color:#4e5969;letter-spacing:0.996px;"><i class="bm"></i>03-15</div>
<div id="t99" class="a" style="left:1160.96px;top:567.91px;font-size:12px;line-height:17px;color:#4e5969;letter-spacing:0.996px;"><i class="bm"></i>03-16</div>
<div id="t100" class="a" style="left:1229.35px;top:567.91px;font-size:12px;line-height:17px;color:#4e5969;letter-spacing:0.996px;"><i class="bm"></i>03-17</div>
<div id="t101" class="a" style="left:1297.74px;top:567.91px;font-size:12px;line-height:17px;color:#4e5969;letter-spacing:0.996px;"><i class="bm"></i>03-18</div>
<div id="t102" class="a" style="left:1366.13px;top:567.91px;font-size:12px;line-height:17px;color:#4e5969;letter-spacing:0.996px;"><i class="bm"></i>03-19</div>
<div id="t103" class="a" style="left:1434.52px;top:567.91px;font-size:12px;line-height:17px;color:#4e5969;letter-spacing:0.996px;"><i class="bm"></i>03-20</div>
<div id="t104" class="a" style="left:1502.91px;top:567.91px;font-size:12px;line-height:17px;color:#4e5969;letter-spacing:0.996px;"><i class="bm"></i>03-21</div>
<div id="t105" class="a" style="left:1571.30px;top:567.91px;font-size:12px;line-height:17px;color:#4e5969;letter-spacing:0.996px;"><i class="bm"></i>03-22</div>
<div id="t106" class="a" style="left:1639.69px;top:567.91px;font-size:12px;line-height:17px;color:#4e5969;letter-spacing:0.996px;"><i class="bm"></i>03-23</div>
<div id="t107" class="a" style="left:1708.08px;top:567.91px;font-size:12px;line-height:17px;color:#4e5969;letter-spacing:0.996px;"><i class="bm"></i>03-24</div>
<svg class="a" style="left:1838.5px;top:609.1px" width="15" height="15" viewBox="0 0 15 15" fill="none" stroke="#262a4a" stroke-width="1.15">
<path d="M13.90 5.90 L13.90 9.10 L12.09 10.15 L12.08 12.25 L9.32 13.84 L7.50 12.80 L5.68 13.84 L2.92 12.25 L2.91 10.15 L1.10 9.10 L1.10 5.90 L2.91 4.85 L2.92 2.75 L5.68 1.16 L7.50 2.20 L9.32 1.16 L12.08 2.75 L12.09 4.85 Z" stroke-linejoin="round"/><circle cx="7.5" cy="7.5" r="2.3"/></svg>
<div class="a" style="left:46px;top:645px;width:1815.5px;height:40.5px;background:#f7f8fa;border:1px solid #e5e6eb;border-bottom:none;border-radius:4px 4px 0 0"></div>
<div class="a" style="left:46px;top:685px;width:1px;height:152px;background:#e5e6eb"></div>
<div class="a" style="left:47px;top:685px;width:1814px;height:1px;background:#e5e6eb"></div>
<div class="a" style="left:47px;top:733px;width:1804px;height:1px;background:#e5e6eb"></div>
<div class="a" style="left:47px;top:781px;width:1804px;height:1px;background:#e5e6eb"></div>
<div class="a" style="left:47px;top:829px;width:1804px;height:1px;background:#e5e6eb"></div>
<div class="a" style="left:1851.5px;top:686px;width:9.5px;height:150.5px;border-radius:4.5px;background:#c9cdd4"></div>
<div id="t108" class="a" style="left:58.80px;top:656.50px;font-size:12px;line-height:17px;color:#1d2129;font-weight:bold;"><i class="bm"></i>日期</div>
<svg class="a" style="left:89.2px;top:659px" width="9" height="13" viewBox="0 0 9 13"><path d="M0.2 5 L4.35 1 L8.5 5 Z" fill="#c9cdd4"/><path d="M0.2 8 L4.35 12 L8.5 8 Z" fill="#1a4ff0"/></svg>
<div class="a" style="left:186.4px;top:659px;width:1px;height:12px;background:#dfe2e7"></div>
<div id="t109" class="a" style="left:196.30px;top:656.50px;font-size:12px;line-height:17px;color:#1d2129;font-weight:bold;letter-spacing:-0.500px;"><i class="bm"></i>广告花费</div>
<svg class="a" style="left:247.9px;top:657.5px" width="14" height="14" viewBox="0 0 14 14" fill="none" stroke="#c9cdd4" stroke-width="1"><circle cx="7" cy="7" r="6.3"/><path d="M4.9 5.3 C4.9 4 5.9 3.3 7 3.3 C8.1 3.3 9.1 4 9.1 5.2 C9.1 6.6 7.1 6.7 7.1 8.4" stroke-width="1.3"/><circle cx="7.1" cy="10.4" r="0.6" fill="#c9cdd4"/></svg>
<svg class="a" style="left:269.0px;top:659px" width="9" height="13" viewBox="0 0 9 13"><path d="M0.2 5 L4.35 1 L8.5 5 Z" fill="#c9cdd4"/><path d="M0.2 8 L4.35 12 L8.5 8 Z" fill="#c9cdd4"/></svg>
<div class="a" style="left:306.3px;top:659px;width:1px;height:12px;background:#dfe2e7"></div>
<div id="t110" class="a" style="left:314.80px;top:656.50px;font-size:12px;line-height:17px;color:#1d2129;font-weight:bold;letter-spacing:0.100px;"><i class="bm"></i>曝光量</div>
<svg class="a" style="left:356.1px;top:657.5px" width="14" height="14" viewBox="0 0 14 14" fill="none" stroke="#c9cdd4" stroke-width="1"><circle cx="7" cy="7" r="6.3"/><path d="M4.9 5.3 C4.9 4 5.9 3.3 7 3.3 C8.1 3.3 9.1 4 9.1 5.2 C9.1 6.6 7.1 6.7 7.1 8.4" stroke-width="1.3"/><circle cx="7.1" cy="10.4" r="0.6" fill="#c9cdd4"/></svg>
<svg class="a" style="left:377.2px;top:659px" width="9" height="13" viewBox="0 0 9 13"><path d="M0.2 5 L4.35 1 L8.5 5 Z" fill="#c9cdd4"/><path d="M0.2 8 L4.35 12 L8.5 8 Z" fill="#c9cdd4"/></svg>
<div class="a" style="left:426.3px;top:659px;width:1px;height:12px;background:#dfe2e7"></div>
<div id="t111" class="a" style="left:435.71px;top:656.50px;font-size:12px;line-height:17px;color:#1d2129;font-weight:bold;letter-spacing:-0.667px;"><i class="bm"></i>触达人数</div>
<svg class="a" style="left:487.8px;top:657.5px" width="14" height="14" viewBox="0 0 14 14" fill="none" stroke="#c9cdd4" stroke-width="1"><circle cx="7" cy="7" r="6.3"/><path d="M4.9 5.3 C4.9 4 5.9 3.3 7 3.3 C8.1 3.3 9.1 4 9.1 5.2 C9.1 6.6 7.1 6.7 7.1 8.4" stroke-width="1.3"/><circle cx="7.1" cy="10.4" r="0.6" fill="#c9cdd4"/></svg>
<svg class="a" style="left:508.9px;top:659px" width="9" height="13" viewBox="0 0 9 13"><path d="M0.2 5 L4.35 1 L8.5 5 Z" fill="#c9cdd4"/><path d="M0.2 8 L4.35 12 L8.5 8 Z" fill="#c9cdd4"/></svg>
<div class="a" style="left:546.2px;top:659px;width:1px;height:12px;background:#dfe2e7"></div>
<div id="t112" class="a" style="left:555.30px;top:657.00px;font-size:12px;line-height:17px;color:#1d2129;font-weight:bold;letter-spacing:0.919px;"><i class="bm"></i>eCPM</div>
<svg class="a" style="left:596.5px;top:657.5px" width="14" height="14" viewBox="0 0 14 14" fill="none" stroke="#c9cdd4" stroke-width="1"><circle cx="7" cy="7" r="6.3"/><path d="M4.9 5.3 C4.9 4 5.9 3.3 7 3.3 C8.1 3.3 9.1 4 9.1 5.2 C9.1 6.6 7.1 6.7 7.1 8.4" stroke-width="1.3"/><circle cx="7.1" cy="10.4" r="0.6" fill="#c9cdd4"/></svg>
<svg class="a" style="left:617.6px;top:659px" width="9" height="13" viewBox="0 0 9 13"><path d="M0.2 5 L4.35 1 L8.5 5 Z" fill="#c9cdd4"/><path d="M0.2 8 L4.35 12 L8.5 8 Z" fill="#c9cdd4"/></svg>
<div class="a" style="left:666.1px;top:659px;width:1px;height:12px;background:#dfe2e7"></div>
<div id="t113" class="a" style="left:674.80px;top:656.50px;font-size:12px;line-height:17px;color:#1d2129;font-weight:bold;letter-spacing:0.050px;"><i class="bm"></i>点击量</div>
<svg class="a" style="left:716.0px;top:657.5px" width="14" height="14" viewBox="0 0 14 14" fill="none" stroke="#c9cdd4" stroke-width="1"><circle cx="7" cy="7" r="6.3"/><path d="M4.9 5.3 C4.9 4 5.9 3.3 7 3.3 C8.1 3.3 9.1 4 9.1 5.2 C9.1 6.6 7.1 6.7 7.1 8.4" stroke-width="1.3"/><circle cx="7.1" cy="10.4" r="0.6" fill="#c9cdd4"/></svg>
<svg class="a" style="left:737.1px;top:659px" width="9" height="13" viewBox="0 0 9 13"><path d="M0.2 5 L4.35 1 L8.5 5 Z" fill="#c9cdd4"/><path d="M0.2 8 L4.35 12 L8.5 8 Z" fill="#c9cdd4"/></svg>
<div class="a" style="left:786.1px;top:659px;width:1px;height:12px;background:#dfe2e7"></div>
<div id="t114" class="a" style="left:795.00px;top:657.00px;font-size:12px;line-height:17px;color:#1d2129;font-weight:bold;letter-spacing:0.352px;"><i class="bm"></i>CTR</div>
<svg class="a" style="left:825.8px;top:657.5px" width="14" height="14" viewBox="0 0 14 14" fill="none" stroke="#c9cdd4" stroke-width="1"><circle cx="7" cy="7" r="6.3"/><path d="M4.9 5.3 C4.9 4 5.9 3.3 7 3.3 C8.1 3.3 9.1 4 9.1 5.2 C9.1 6.6 7.1 6.7 7.1 8.4" stroke-width="1.3"/><circle cx="7.1" cy="10.4" r="0.6" fill="#c9cdd4"/></svg>
<svg class="a" style="left:846.9px;top:659px" width="9" height="13" viewBox="0 0 9 13"><path d="M0.2 5 L4.35 1 L8.5 5 Z" fill="#c9cdd4"/><path d="M0.2 8 L4.35 12 L8.5 8 Z" fill="#c9cdd4"/></svg>
<div class="a" style="left:906.0px;top:659px;width:1px;height:12px;background:#dfe2e7"></div>
<div id="t115" class="a" style="left:915.21px;top:657.00px;font-size:12px;line-height:17px;color:#1d2129;font-weight:bold;letter-spacing:0.485px;"><i class="bm"></i>eCPC</div>
<svg class="a" style="left:954.1px;top:657.5px" width="14" height="14" viewBox="0 0 14 14" fill="none" stroke="#c9cdd4" stroke-width="1"><circle cx="7" cy="7" r="6.3"/><path d="M4.9 5.3 C4.9 4 5.9 3.3 7 3.3 C8.1 3.3 9.1 4 9.1 5.2 C9.1 6.6 7.1 6.7 7.1 8.4" stroke-width="1.3"/><circle cx="7.1" cy="10.4" r="0.6" fill="#c9cdd4"/></svg>
<svg class="a" style="left:975.2px;top:659px" width="9" height="13" viewBox="0 0 9 13"><path d="M0.2 5 L4.35 1 L8.5 5 Z" fill="#c9cdd4"/><path d="M0.2 8 L4.35 12 L8.5 8 Z" fill="#c9cdd4"/></svg>
<div class="a" style="left:1025.9px;top:659px;width:1px;height:12px;background:#dfe2e7"></div>
<div id="t116" class="a" style="left:1035.11px;top:657.00px;font-size:12px;line-height:17px;color:#1d2129;font-weight:bold;letter-spacing:1.515px;"><i class="bm"></i>DPV</div>
<svg class="a" style="left:1067.9px;top:657.5px" width="14" height="14" viewBox="0 0 14 14" fill="none" stroke="#c9cdd4" stroke-width="1"><circle cx="7" cy="7" r="6.3"/><path d="M4.9 5.3 C4.9 4 5.9 3.3 7 3.3 C8.1 3.3 9.1 4 9.1 5.2 C9.1 6.6 7.1 6.7 7.1 8.4" stroke-width="1.3"/><circle cx="7.1" cy="10.4" r="0.6" fill="#c9cdd4"/></svg>
<svg class="a" style="left:1089.0px;top:659px" width="9" height="13" viewBox="0 0 9 13"><path d="M0.2 5 L4.35 1 L8.5 5 Z" fill="#c9cdd4"/><path d="M0.2 8 L4.35 12 L8.5 8 Z" fill="#c9cdd4"/></svg>
<div class="a" style="left:1145.8px;top:659px;width:1px;height:12px;background:#dfe2e7"></div>
<div id="t117" class="a" style="left:1155.00px;top:657.00px;font-size:12px;line-height:17px;color:#1d2129;font-weight:bold;letter-spacing:1.175px;"><i class="bm"></i>DPVR</div>
<svg class="a" style="left:1197.3px;top:657.5px" width="14" height="14" viewBox="0 0 14 14" fill="none" stroke="#c9cdd4" stroke-width="1"><circle cx="7" cy="7" r="6.3"/><path d="M4.9 5.3 C4.9 4 5.9 3.3 7 3.3 C8.1 3.3 9.1 4 9.1 5.2 C9.1 6.6 7.1 6.7 7.1 8.4" stroke-width="1.3"/><circle cx="7.1" cy="10.4" r="0.6" fill="#c9cdd4"/></svg>
<svg class="a" style="left:1218.4px;top:659px" width="9" height="13" viewBox="0 0 9 13"><path d="M0.2 5 L4.35 1 L8.5 5 Z" fill="#c9cdd4"/><path d="M0.2 8 L4.35 12 L8.5 8 Z" fill="#c9cdd4"/></svg>
<div class="a" style="left:1265.8px;top:659px;width:1px;height:12px;background:#dfe2e7"></div>
<div id="t118" class="a" style="left:1276.30px;top:656.50px;font-size:12px;line-height:17px;color:#1d2129;font-weight:bold;letter-spacing:0.610px;"><i class="bm"></i>总DPV</div>
<svg class="a" style="left:1319.9px;top:657.5px" width="14" height="14" viewBox="0 0 14 14" fill="none" stroke="#c9cdd4" stroke-width="1"><circle cx="7" cy="7" r="6.3"/><path d="M4.9 5.3 C4.9 4 5.9 3.3 7 3.3 C8.1 3.3 9.1 4 9.1 5.2 C9.1 6.6 7.1 6.7 7.1 8.4" stroke-width="1.3"/><circle cx="7.1" cy="10.4" r="0.6" fill="#c9cdd4"/></svg>
<svg class="a" style="left:1341.0px;top:659px" width="9" height="13" viewBox="0 0 9 13"><path d="M0.2 5 L4.35 1 L8.5 5 Z" fill="#c9cdd4"/><path d="M0.2 8 L4.35 12 L8.5 8 Z" fill="#c9cdd4"/></svg>
<div class="a" style="left:1385.7px;top:659px;width:1px;height:12px;background:#dfe2e7"></div>
<div id="t119" class="a" style="left:1396.21px;top:656.50px;font-size:12px;line-height:17px;color:#1d2129;font-weight:bold;letter-spacing:0.557px;"><i class="bm"></i>总DPVR</div>
<svg class="a" style="left:1449.2px;top:657.5px" width="14" height="14" viewBox="0 0 14 14" fill="none" stroke="#c9cdd4" stroke-width="1"><circle cx="7" cy="7" r="6.3"/><path d="M4.9 5.3 C4.9 4 5.9 3.3 7 3.3 C8.1 3.3 9.1 4 9.1 5.2 C9.1 6.6 7.1 6.7 7.1 8.4" stroke-width="1.3"/><circle cx="7.1" cy="10.4" r="0.6" fill="#c9cdd4"/></svg>
<svg class="a" style="left:1470.3px;top:659px" width="9" height="13" viewBox="0 0 9 13"><path d="M0.2 5 L4.35 1 L8.5 5 Z" fill="#c9cdd4"/><path d="M0.2 8 L4.35 12 L8.5 8 Z" fill="#c9cdd4"/></svg>
<div class="a" style="left:1505.6px;top:659px;width:1px;height:12px;background:#dfe2e7"></div>
<div id="t120" class="a" style="left:1515.00px;top:657.00px;font-size:12px;line-height:17px;color:#1d2129;font-weight:bold;letter-spacing:1.175px;"><i class="bm"></i>PRPV</div>
<svg class="a" style="left:1556.3px;top:657.5px" width="14" height="14" viewBox="0 0 14 14" fill="none" stroke="#c9cdd4" stroke-width="1"><circle cx="7" cy="7" r="6.3"/><path d="M4.9 5.3 C4.9 4 5.9 3.3 7 3.3 C8.1 3.3 9.1 4 9.1 5.2 C9.1 6.6 7.1 6.7 7.1 8.4" stroke-width="1.3"/><circle cx="7.1" cy="10.4" r="0.6" fill="#c9cdd4"/></svg>
<svg class="a" style="left:1577.4px;top:659px" width="9" height="13" viewBox="0 0 9 13"><path d="M0.2 5 L4.35 1 L8.5 5 Z" fill="#c9cdd4"/><path d="M0.2 8 L4.35 12 L8.5 8 Z" fill="#c9cdd4"/></svg>
<div class="a" style="left:1625.6px;top:659px;width:1px;height:12px;background:#dfe2e7"></div>
<div id="t121" class="a" style="left:1636.00px;top:656.50px;font-size:12px;line-height:17px;color:#1d2129;font-weight:bold;letter-spacing:0.582px;"><i class="bm"></i>总PRPV</div>
<svg class="a" style="left:1688.1px;top:657.5px" width="14" height="14" viewBox="0 0 14 14" fill="none" stroke="#c9cdd4" stroke-width="1"><circle cx="7" cy="7" r="6.3"/><path d="M4.9 5.3 C4.9 4 5.9 3.3 7 3.3 C8.1 3.3 9.1 4 9.1 5.2 C9.1 6.6 7.1 6.7 7.1 8.4" stroke-width="1.3"/><circle cx="7.1" cy="10.4" r="0.6" fill="#c9cdd4"/></svg>
<svg class="a" style="left:1709.2px;top:659px" width="9" height="13" viewBox="0 0 9 13"><path d="M0.2 5 L4.35 1 L8.5 5 Z" fill="#c9cdd4"/><path d="M0.2 8 L4.35 12 L8.5 8 Z" fill="#c9cdd4"/></svg>
<div class="a" style="left:1745.5px;top:659px;width:1px;height:12px;background:#dfe2e7"></div>
<div id="t122" class="a" style="left:1754.80px;top:657.00px;font-size:12px;line-height:17px;color:#1d2129;font-weight:bold;letter-spacing:0.981px;"><i class="bm"></i>PRPVR</div>
<svg class="a" style="left:1805.5px;top:657.5px" width="14" height="14" viewBox="0 0 14 14" fill="none" stroke="#c9cdd4" stroke-width="1"><circle cx="7" cy="7" r="6.3"/><path d="M4.9 5.3 C4.9 4 5.9 3.3 7 3.3 C8.1 3.3 9.1 4 9.1 5.2 C9.1 6.6 7.1 6.7 7.1 8.4" stroke-width="1.3"/><circle cx="7.1" cy="10.4" r="0.6" fill="#c9cdd4"/></svg>
<svg class="a" style="left:1826.6px;top:659px" width="9" height="13" viewBox="0 0 9 13"><path d="M0.2 5 L4.35 1 L8.5 5 Z" fill="#c9cdd4"/><path d="M0.2 8 L4.35 12 L8.5 8 Z" fill="#c9cdd4"/></svg>
<div class="a" style="left:59px;top:691.9px;width:32px;height:18px;border-radius:2px;background:#e8f0fe"></div>
<div id="t123" class="a" style="left:63.00px;top:692.61px;font-size:12px;line-height:17px;color:#1a4ff0;"><i class="bm"></i>周一</div>
<div id="t124" class="a" style="left:95.50px;top:693.11px;font-size:12px;line-height:17px;color:#1d2129;letter-spacing:1.010px;"><i class="bm"></i>2026-03-23</div>
<div id="t125" class="a" style="left:195.30px;top:693.11px;font-size:12px;line-height:17px;color:#1d2129;letter-spacing:0.900px;"><i class="bm"></i>$21.96</div>
<div id="t126" class="a" style="left:315.24px;top:693.11px;font-size:12px;line-height:17px;color:#1d2129;letter-spacing:0.885px;"><i class="bm"></i>4,788</div>
<div id="t127" class="a" style="left:435.16px;top:693.11px;font-size:12px;line-height:17px;color:#1d2129;"><i class="bm"></i>0</div>
<div id="t128" class="a" style="left:555.10px;top:693.11px;font-size:12px;line-height:17px;color:#1d2129;letter-spacing:0.885px;"><i class="bm"></i>$4.59</div>
<div id="t129" class="a" style="left:676.22px;top:693.11px;font-size:12px;line-height:17px;color:#1d2129;letter-spacing:-0.610px;"><i class="bm"></i>15</div>
<div id="t130" class="a" style="left:794.96px;top:693.11px;font-size:12px;line-height:17px;color:#1d2129;letter-spacing:1.205px;"><i class="bm"></i>0.31%</div>
<div id="t131" class="a" style="left:914.88px;top:693.11px;font-size:12px;line-height:17px;color:#1d2129;letter-spacing:0.885px;"><i class="bm"></i>$1.46</div>
<div id="t132" class="a" style="left:1034.82px;top:693.11px;font-size:12px;line-height:17px;color:#1d2129;"><i class="bm"></i>3</div>
<div id="t133" class="a" style="left:1154.75px;top:693.11px;font-size:12px;line-height:17px;color:#1d2129;letter-spacing:1.205px;"><i class="bm"></i>0.06%</div>
<div id="t134" class="a" style="left:1274.68px;top:693.11px;font-size:12px;line-height:17px;color:#1d2129;"><i class="bm"></i>6</div>
<div id="t135" class="a" style="left:1394.61px;top:693.11px;font-size:12px;line-height:17px;color:#1d2129;letter-spacing:1.205px;"><i class="bm"></i>0.13%</div>
<div id="t136" class="a" style="left:1514.54px;top:693.11px;font-size:12px;line-height:17px;color:#1d2129;"><i class="bm"></i>0</div>
<div id="t137" class="a" style="left:1635.66px;top:693.11px;font-size:12px;line-height:17px;color:#1d2129;"><i class="bm"></i>1</div>
<div id="t138" class="a" style="left:1754.41px;top:693.11px;font-size:12px;line-height:17px;color:#1d2129;letter-spacing:1.205px;"><i class="bm"></i>0.00%</div>
<div class="a" style="left:59px;top:739.9px;width:32px;height:18px;border-radius:2px;background:#ffefd9"></div>
<div id="t139" class="a" style="left:63.00px;top:740.61px;font-size:12px;line-height:17px;color:#f7811e;"><i class="bm"></i>周日</div>
<div id="t140" class="a" style="left:95.50px;top:741.11px;font-size:12px;line-height:17px;color:#1d2129;letter-spacing:1.010px;"><i class="bm"></i>2026-03-22</div>
<div id="t141" class="a" style="left:195.30px;top:741.11px;font-size:12px;line-height:17px;color:#1d2129;letter-spacing:0.900px;"><i class="bm"></i>$30.66</div>
<div id="t142" class="a" style="left:315.24px;top:741.11px;font-size:12px;line-height:17px;color:#1d2129;letter-spacing:0.885px;"><i class="bm"></i>6,841</div>
<div id="t143" class="a" style="left:435.16px;top:741.11px;font-size:12px;line-height:17px;color:#1d2129;"><i class="bm"></i>0</div>
<div id="t144" class="a" style="left:555.10px;top:741.11px;font-size:12px;line-height:17px;color:#1d2129;letter-spacing:0.885px;"><i class="bm"></i>$4.48</div>
<div id="t145" class="a" style="left:676.22px;top:741.11px;font-size:12px;line-height:17px;color:#1d2129;letter-spacing:-0.610px;"><i class="bm"></i>16</div>
<div id="t146" class="a" style="left:794.96px;top:741.11px;font-size:12px;line-height:17px;color:#1d2129;letter-spacing:1.205px;"><i class="bm"></i>0.23%</div>
<div id="t147" class="a" style="left:914.88px;top:741.11px;font-size:12px;line-height:17px;color:#1d2129;letter-spacing:0.885px;"><i class="bm"></i>$1.92</div>
<div id="t148" class="a" style="left:1034.82px;top:741.11px;font-size:12px;line-height:17px;color:#1d2129;letter-spacing:0.590px;"><i class="bm"></i>32</div>
<div id="t149" class="a" style="left:1154.75px;top:741.11px;font-size:12px;line-height:17px;color:#1d2129;letter-spacing:1.205px;"><i class="bm"></i>0.47%</div>
<div id="t150" class="a" style="left:1274.68px;top:741.11px;font-size:12px;line-height:17px;color:#1d2129;letter-spacing:0.590px;"><i class="bm"></i>38</div>
<div id="t151" class="a" style="left:1394.61px;top:741.11px;font-size:12px;line-height:17px;color:#1d2129;letter-spacing:1.205px;"><i class="bm"></i>0.56%</div>
<div id="t152" class="a" style="left:1515.74px;top:741.11px;font-size:12px;line-height:17px;color:#1d2129;"><i class="bm"></i>1</div>
<div id="t153" class="a" style="left:1634.47px;top:741.11px;font-size:12px;line-height:17px;color:#1d2129;"><i class="bm"></i>2</div>
<div id="t154" class="a" style="left:1754.41px;top:741.11px;font-size:12px;line-height:17px;color:#1d2129;letter-spacing:1.205px;"><i class="bm"></i>0.01%</div>
<div class="a" style="left:59px;top:787.9px;width:32px;height:18px;border-radius:2px;background:#ffefd9"></div>
<div id="t155" class="a" style="left:63.00px;top:788.61px;font-size:12px;line-height:17px;color:#f7811e;"><i class="bm"></i>周六</div>
<div id="t156" class="a" style="left:95.50px;top:789.11px;font-size:12px;line-height:17px;color:#1d2129;letter-spacing:1.010px;"><i class="bm"></i>2026-03-21</div>
<div id="t157" class="a" style="left:195.30px;top:789.11px;font-size:12px;line-height:17px;color:#1d2129;letter-spacing:0.900px;"><i class="bm"></i>$30.26</div>
<div id="t158" class="a" style="left:315.24px;top:789.11px;font-size:12px;line-height:17px;color:#1d2129;letter-spacing:0.885px;"><i class="bm"></i>6,640</div>
<div id="t159" class="a" style="left:435.16px;top:789.11px;font-size:12px;line-height:17px;color:#1d2129;"><i class="bm"></i>0</div>
<div id="t160" class="a" style="left:555.10px;top:789.11px;font-size:12px;line-height:17px;color:#1d2129;letter-spacing:0.885px;"><i class="bm"></i>$4.56</div>
<div id="t161" class="a" style="left:675.02px;top:789.11px;font-size:12px;line-height:17px;color:#1d2129;"><i class="bm"></i>8</div>
<div id="t162" class="a" style="left:794.96px;top:789.11px;font-size:12px;line-height:17px;color:#1d2129;letter-spacing:1.205px;"><i class="bm"></i>0.12%</div>
<div id="t163" class="a" style="left:914.88px;top:789.11px;font-size:12px;line-height:17px;color:#1d2129;letter-spacing:0.885px;"><i class="bm"></i>$3.78</div>
<div id="t164" class="a" style="left:1034.82px;top:789.11px;font-size:12px;line-height:17px;color:#1d2129;letter-spacing:0.590px;"><i class="bm"></i>32</div>
<div id="t165" class="a" style="left:1154.75px;top:789.11px;font-size:12px;line-height:17px;color:#1d2129;letter-spacing:1.205px;"><i class="bm"></i>0.48%</div>
<div id="t166" class="a" style="left:1274.68px;top:789.11px;font-size:12px;line-height:17px;color:#1d2129;letter-spacing:0.590px;"><i class="bm"></i>47</div>
<div id="t167" class="a" style="left:1394.61px;top:789.11px;font-size:12px;line-height:17px;color:#1d2129;letter-spacing:1.205px;"><i class="bm"></i>0.71%</div>
<div id="t168" class="a" style="left:1514.54px;top:789.11px;font-size:12px;line-height:17px;color:#1d2129;"><i class="bm"></i>0</div>
<div id="t169" class="a" style="left:1634.47px;top:789.11px;font-size:12px;line-height:17px;color:#1d2129;"><i class="bm"></i>0</div>
<div id="t170" class="a" style="left:1754.41px;top:789.11px;font-size:12px;line-height:17px;color:#1d2129;letter-spacing:1.205px;"><i class="bm"></i>0.00%</div>
<div class="a" style="left:59px;top:835.5px;width:32px;height:1px;background:#e3ecfd"></div>
<div class="a" style="left:1828px;top:849px;width:49px;height:32px;border:1px solid #e0e3e8;border-radius:4px;background:#fff"></div>
<div id="t171" class="a" style="left:1841.00px;top:856.80px;font-size:12px;line-height:17px;color:#1d2129;"><i class="bm"></i>关闭</div>
</body></html>
